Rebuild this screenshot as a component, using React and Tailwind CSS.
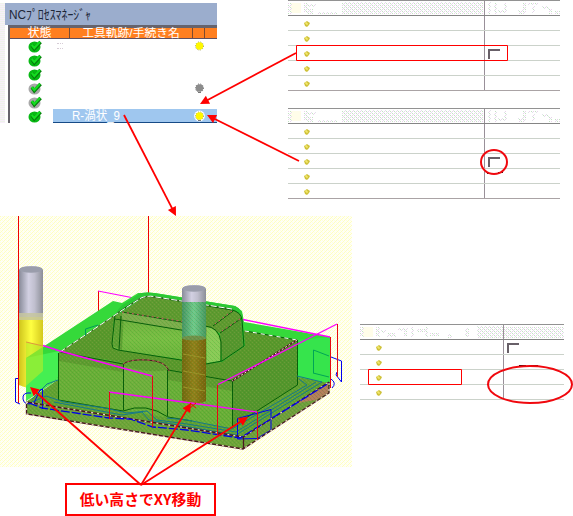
import React from "react";

const JP = "font-['Liberation_Sans','Noto_Sans_CJK_JP',sans-serif]";

function CheckIcon({ muted }) {
  return (
    <svg width="16" height="14" viewBox="0 0 16 14" className="block">
      <ellipse cx="6.5" cy="8" rx="6" ry="5.6" fill={muted ? "#a8a8a8" : "#08b914"} />
      <path d="M4 6.5 6.3 9.8 12.6 3" fill="none" stroke="#067a0b" strokeWidth="3.4" />
      <path d="M3.8 6 6.3 9 12 2.8" fill="none" stroke="#14dc20" strokeWidth="2.2" />
    </svg>
  );
}

function Lamp({ off, white }) {
  return (
    <svg width="12" height="12" viewBox="0 0 12 12" className="block">
      {white && <circle cx="5.5" cy="6" r="5.4" fill="#fff" />}
      <circle cx="5.5" cy="6" r="4" fill="none" stroke={off ? "#555" : "#88883c"} strokeWidth="1" strokeDasharray="1 1.4" />
      <circle cx="5.5" cy="6" r="3.7" fill={off ? "#8c8c8c" : "#fff800"} />
      {(off || white) && <path d="M4 10.5h3" stroke="#777" />}
    </svg>
  );
}

const processes = [
  { lamp: "on" },
  {},
  {},
  { muted: true, lamp: "off" },
  { muted: true },
  { name: "R-渦状_9", lamp: "on", selected: true },
];

function ProcessManager() {
  return (
    <section className={`mt-[3px] flex h-[120px] w-[217px] overflow-hidden ${JP}`}>
      <div className="w-[5px] bg-[repeating-linear-gradient(180deg,#eef3ea_0_1px,#f7eefa_1px_2px)]" />
      <div className="flex-1">
        <h1 className="h-[22px] whitespace-nowrap bg-[#9badcd] pl-1 pt-[1px] text-[13px] leading-[21px]">
          <svg width="86" height="21" className="block overflow-visible">
            <text x="0" y="15" textLength="82" lengthAdjust="spacingAndGlyphs" fill="#1d2637">NCﾌﾟﾛｾｽﾏﾈｰｼﾞｬ</text>
          </svg>
        </h1>
        <div className="ml-[3px] h-[98px] border-l-2 border-t-[3px] border-[#66636c]">
          <div className="flex h-[11px] border-b border-[#605060] bg-[#ff7f20] text-[12px] leading-[10px] text-white">
            <div className="w-[60px] border-r border-[#7c4a30] text-center">状態</div>
            <div className="w-[123px] whitespace-nowrap border-r border-[#7c4a30] text-center text-[11.8px]">工具軌跡/手続き名</div>
            <div className="w-[12px] border-r border-[#7c4a30]" />
          </div>
          {processes.map((p, i) => (
            <div key={i} className="flex h-[14px]">
              <div className="w-[43px] pl-[18px]"><CheckIcon muted={p.muted} /></div>
              <div className={`flex flex-1 items-center ${p.selected ? "border-b border-[#164a86] bg-[#9fc7ef]" : ""}`}>
                <div className="w-[141px] whitespace-nowrap pl-[19px] text-[12.4px] leading-[14px] text-white">
                  {i === 0 && <span className="-ml-[15px] block h-[6px] w-[6px] border-y border-dotted border-[#d6ccd6]" />}
                  {p.name && (
                    <svg width="52" height="13" className="block overflow-visible">
                      <text x="0" y="11" textLength="48" lengthAdjust="spacingAndGlyphs" fill="#fff">{p.name}</text>
                    </svg>
                  )}
                </div>
                {p.lamp && <Lamp off={p.lamp === "off"} white={p.selected} />}
              </div>
            </div>
          ))}
        </div>
      </div>
    </section>
  );
}

function Bullet() {
  return (
    <svg width="6" height="6" viewBox="0 0 6 6">
      <path d="M0 2 3 0 6 2 5 4 3 6 1 5Z" fill="#cfc23a" />
      <path d="M1 2h2v2" stroke="#fff47d" fill="none" />
    </svg>
  );
}

function CheckBox() {
  return <span className="block h-[10px] w-[12px] border-l-2 border-t-2 border-[#686068]" />;
}

function HeaderGrain({ rows, small, id }) {
  return (
    <svg width="100%" height="14" className="block">
      <defs>
        <pattern id={id} width="4" height="4" patternUnits="userSpaceOnUse">
          <path d="M0 .5h1M2 2.5h1" stroke="#c3e4c2" />
          <path d="M2 .5h1M0 2.5h1" stroke="#ebd3ec" />
          <path d="M1 1.5h1M3 3.5h1" stroke="#e2e2ea" />
        </pattern>
      </defs>
      {!small && <rect x="3" y="2" width="10" height="10" fill="#fffde9" />}
      {rows.map(([x, y, w, h], i) => <rect key={i} x={x} y={y} width={w} height={h} fill={`url(#${id})`} />)}
    </svg>
  );
}

function PropertyTable({ id, rows, checked, wide, narrow, grain, endGrain }) {
  return (
    <div className={`${wide ? "w-[272px]" : "w-[204px]"} border-t border-[#929292]`}>
      {[-1, ...Array(rows).keys()].map((i) => (
        <div
          key={i}
          className={`flex h-[15px] border-b ${i === -1 ? "border-[#858585]" : i === rows - 1 && !narrow ? "border-[#aaa3a5]" : "border-[#cbd2ca]"}`}
        >
          <div className={`${wide ? "w-[197px]" : "w-[144px]"} border-r border-[#999099] ${i >= 0 ? "pl-4 pt-[5px]" : ""}`}>
            {i < 0 ? <HeaderGrain id={`${id}-name`} rows={grain} /> : <Bullet />}
          </div>
          <div className={i >= 0 ? "pl-[3px] pt-[3px]" : "flex-1"}>
            {i < 0 ? <HeaderGrain id={`${id}-value`} rows={endGrain} small /> : i === checked && <CheckBox />}
          </div>
        </div>
      ))}
    </div>
  );
}

const grainWide = [[0, 2, 4, 11], [16, 2, 4, 10], [20, 3, 8, 3], [20, 8, 5, 5], [30, 11, 20, 2], [54, 1, 141, 12]];
const endWide = [[3, 1, 3, 12], [9, 2, 3, 11], [13, 9, 9, 3], [19, 2, 3, 7], [33, 9, 7, 4], [38, 2, 3, 10], [43, 2, 10, 2], [47, 5, 3, 7], [57, 5, 7, 3], [64, 8, 3, 5], [70, 10, 5, 3]];
const grainNarrow = [[0, 2, 4, 10], [16, 2, 4, 10], [21, 5, 5, 3], [27, 8, 9, 4], [38, 3, 10, 3], [44, 6, 3, 6], [51, 2, 3, 10], [57, 4, 8, 3], [65, 2, 3, 10], [70, 8, 9, 3], [88, 9, 4, 4], [105, 3, 4, 9], [117, 1, 26, 12]];

function Cutter({ x, top, mid, bottom, tint, clip }) {
  return (
    <g>
      <path d={`M${x} ${mid}V${top + 4}Q${x + 1} ${top} ${x + 12} ${top}T${x + 24} ${top + 4}V${mid}Z`} fill="url(#steel)" />
      <ellipse cx={x + 12} cy={top + 3.5} rx="11.5" ry="3.3" fill="#9a9dab" />
      <path d={`M${x} ${mid - 3}H${x + 24}V${bottom - 3}Q${x + 12} ${bottom + 3} ${x} ${bottom - 3}Z`} fill={`url(#${tint})`} />
      {clip && <rect x={x} y={mid - 7} width="24" height="7" fill="#c5c6a0" opacity=".85" />}
    </g>
  );
}

const rim = "M60 352 118 313 124 309 141 298Q148 295 156 297L232 309";

function MachiningView() {
  return (
    <svg width="352" height="251" viewBox="0 216 352 251" className="block shrink-0">
      <defs>
        <pattern id="cream" width="4" height="4" patternUnits="userSpaceOnUse">
          <rect width="4" height="4" fill="#fffff6" />
          <path d="M0 .5h1M3 1.5h1M2 2.5h1M1 3.5h1" stroke="#ffffc0" />
          <path d="M2 .5h1M0 2.5h1" stroke="#ffffe0" />
        </pattern>
        <pattern id="grain" width="4" height="4" patternUnits="userSpaceOnUse">
          <path d="M0 .5h1M2 2.5h1" stroke="#2e7a18" opacity=".22" />
          <path d="M2 .5h1M0 2.5h1" stroke="#a8b060" opacity=".24" />
          <path d="M1 1.5h1M3 3.5h1" stroke="#35a021" opacity=".22" />
        </pattern>
        <linearGradient id="steel">
          <stop offset="0" stopColor="#888b99" /><stop offset=".4" stopColor="#d2d0e2" />
          <stop offset=".65" stopColor="#c0bfce" /><stop offset="1" stopColor="#8c8f98" />
        </linearGradient>
        <linearGradient id="gold">
          <stop offset="0" stopColor="#cfc51c" /><stop offset=".5" stopColor="#ffff42" /><stop offset="1" stopColor="#d4c91d" />
        </linearGradient>
        <linearGradient id="bronze">
          <stop offset="0" stopColor="#73660e" /><stop offset=".5" stopColor="#93801a" /><stop offset="1" stopColor="#77600b" />
        </linearGradient>
        <linearGradient id="jade">
          <stop offset="0" stopColor="#3f9460" /><stop offset=".5" stopColor="#68cc88" /><stop offset="1" stopColor="#3f985e" />
        </linearGradient>
        <linearGradient id="bossFront" x1="0" y1="0" x2="0" y2="1">
          <stop offset="0" stopColor="#6bae3c" /><stop offset=".5" stopColor="#78c044" /><stop offset="1" stopColor="#69b23a" />
        </linearGradient>
      </defs>
      <rect y="216" width="352" height="251" fill="url(#cream)" />
      <path d="M18.5 216V403M148.5 216V294M98.5 291V328" stroke="#f00000" />
      <path d="M98 291 134 298" stroke="#ff00ff" strokeWidth="1.2" />
      <Cutter x={19} top={266} mid={320} bottom={388} tint="gold" clip />

      <path d="M26 358 113 301 122 303 138 293 155 293 235 306 242 311 244 322 330 337V386L297 382 60 375 26 401Z" fill="#35d93a" />
      <path d="M26 358 59 351V379L26 401Z" fill="#45ef52" />
      <path d="M26 342 43 345V371L26 386Z" fill="#b9ed28" opacity=".6" />
      <path d="M297 340 330 337V386L297 382Z" fill="#36e44c" />

      <path d="M26 402 59 379 297 377 329 383 243 437Z" fill="#62a232" />
      <path d="M26 402 243 437V449L26 414Z" fill="#6fa53a" />
      <path d="M243 437 329 383V393L243 449Z" fill="#6f9f3c" />
      <path d="M296 404 328 384V393L316 400 303 402Z" fill="#b57c5c" />

      <path d="M60 352 118 313 245 331 297 340 232 381 168 370Z" fill="#5a982c" />
      <path d="M59 352 232 381V428L59 400Z" fill="#69b038" />
      <path d="M59 352 232 381V391L59 361Z" fill="#5a942d" opacity=".7" />
      <path d="M232 381 297 340V385L232 427Z" fill="#55962d" />

      <path d="M123 365Q127 359 146 360T168 370V413L146 406 123 408Z" fill="#6fb13d" />
      <path d="M124 365Q128 360 146 360 162 361 168 370 147 374 124 366Z" fill="#619f33" />

      <path d="M113 338Q112 311 124 304L139 294Q145 291 154 293L235 306Q243 309 243 320L245 346 222 362 206 364 117 350Z" fill="#2cc834" />
      <path d="M122 312 141 299Q146 296 155 297L232 310Q242 312 241 320L220 333 205 326Z" fill="#5f9a30" />
      <path d="M115 315 120 313 207 327Q219 329 221 342V360L206 363 117 350 112 347Z" fill="url(#bossFront)" />
      <path d="M115 315 124 312 122 350 113 346Z" fill="#5ea133" />
      <path d="M122 312 204 326 214 330 208 334 122 321Z" fill="#7cae4c" />
      <path d="M207 327 215 330 220 340V361L207 363Z" fill="#8acd58" />
      <path d="M220 333 241 319 243 346 222 361Z" fill="#56962e" />
      <path d="M26 402 60 375 60 352 118 313 140 297 236 309 244 330 297 340V377L329 383V393L243 449 26 414Z" fill="url(#grain)" />

      <g fill="none" stroke="#075f0a" strokeWidth="1">
        <path d="M58.5 353V400L123 411Q146 402 168 417L192 421M60 352 123 364M168 370 232 381M232.5 381V428M297.5 340V385L232 427" />
        <path d="M123.5 364V410M167.5 370V416" />
        <path d="M113 348 112 344 115 315Q122 309 141 298 147 295 155 297L232 310Q241 312 242 320L244 346 222 361 206 364 118 350Z" />
        <path d="M115 319 205 334M122 312 205 326Q219 327 221 342V361M213 326 233 311M220 333 242 318M121 316 119 350" />
        <path d="M245 331 297 340" />
      </g>
      <g fill="none" strokeWidth="1">
        <path d={rim} stroke="#36581b" />
        <path d={rim} stroke="#ffffff" strokeDasharray="6 2" />
        <path d="M245 331 297 340" stroke="#ffffff" strokeDasharray="4 4" />
        <path d="M297 340 232 381" stroke="#4c1720" strokeWidth="1.6" />
        <path d="M297 340 232 381" stroke="#ffdfd6" strokeDasharray="2 2" />
        <path d="M123 364Q130 359 147 360 166 361 169 371" stroke="#4c1720" />
        <path d="M123 364Q130 359 147 360 166 361 169 371M122 312 204 325M232 311 215 324M240 319 222 331" stroke="#d05864" strokeDasharray="2 3" />
        <path d="M85.5 336V329L98 325" stroke="#009c58" />
      </g>

      <Cutter x={182} top={285} mid={341} bottom={404} tint="bronze" />
      <rect x="182" y="302" width="24" height="37" fill="url(#jade)" opacity=".92" />
      <ellipse cx="194" cy="338" rx="12" ry="2.5" fill="#70914a" />
      <path d="M183 354 205 358M183 371 205 375M183 387 205 391" stroke="#9d9326" />
      <path d="M182 302H206V404H182Z" fill="url(#grain)" />

      <g fill="none" stroke="#16788a">
        <path d="M32 399 47 384 58 380M30 403 46 396 64 402 105 408 127 413 147 411 157 420 187 424 236 432 316 382" />
        <path d="M54 402 80 407 122 415 142 412 149 420 189 427 236 435 322 382 297 376" />
        <path d="M167 418 187 420 232 429 307 385 299 379" />
      </g>
      <g fill="none" stroke="#0000ef" strokeWidth="1">
        <path d="M18 378.5H15.5V402L20 404M31 393Q22 392 23 399T34 403L40 390 42.5 389V409" />
        <path d="M237.5 418.5 271 409.5V430L257 438.5 237.5 439ZM331 357 341.5 361V382L336 375 337 372M331 379Q337 383 332 388" />
        <path d="M313.5 373V350L329 356" stroke="#00a556" />
        <path d="M313 373 329 377" stroke="#00a556" />
      </g>
      <g fill="none" strokeWidth="1.3">
        <path d="M26.5 402V414L243 449 329 393V382M243.5 437V449M26 402 243 437 329 382" stroke="#481721" />
        <path d="M26.5 402V414L243 449 329 393V382M26 402 243 437 329 382" stroke="#e5d5bb" strokeDasharray="2 4" />
      </g>
      <path d="M29 403 42 408 109 418 130 419 153 427 187 430 240 438 329 383" fill="none" stroke="#0000e8" strokeWidth="1.3" strokeDasharray="9 2" />
      <g fill="none" stroke="#ff00ff" strokeWidth="1.4">
        <path d="M43 345.5 60 351 152 376M109 392 176 401 257 412M218 384.5 337 324M243 319.5 330 337" />
        <path d="M26 342 43 346" stroke="#e2963f" strokeWidth="1" />
      </g>
      <path d="M152.5 376V427M109.5 392V419M217.5 385V435M257.5 412V440M330.5 337V388M337.5 324V377" stroke="#e60910" />
      <path d="M190 403 196 408M196 403 190 408" stroke="#ff0000" />
    </svg>
  );
}

function Arrow({ from, to }) {
  const angle = Math.atan2(to[1] - from[1], to[0] - from[0]);
  const end = [to[0] - Math.cos(angle) * 6, to[1] - Math.sin(angle) * 6];
  return (
    <g stroke="#ff0000" fill="#ff0000">
      <path d={`M${from[0]} ${from[1]} ${end[0]} ${end[1]}`} strokeWidth="1.8" />
      <path d="M0 0-9-4.5V4.5Z" stroke="none" transform={`translate(${to[0]} ${to[1]}) rotate(${angle * 180 / Math.PI})`} />
    </g>
  );
}

function Annotations() {
  return (
    <svg width="573" height="516" className="pointer-events-none absolute inset-0">
      <path d="M487 173.5h4M498 172.5h5M519 365.5h7M530 365.5h8" stroke="#111" />
      <Arrow from={[296, 53]} to={[200, 104]} />
      <Arrow from={[299, 161]} to={[207, 115]} />
      <Arrow from={[124, 115]} to={[176, 216]} />
      <Arrow from={[141, 485]} to={[30, 387]} />
      <Arrow from={[141, 485]} to={[191, 403]} />
      <Arrow from={[141, 485]} to={[248, 417]} />
      <g fill="none" stroke="#ff0000">
        <path d="M296.5 45.5H507.5V60.5H296.5ZM368.5 369.5H461.5V384.5H368.5Z" />
        <ellipse cx="494" cy="162" rx="13" ry="12" stroke="#f0080e" strokeWidth="2" />
        <ellipse cx="530" cy="384.5" rx="42" ry="18.5" stroke="#f0080e" strokeWidth="2" />
      </g>
    </svg>
  );
}

export default function App() {
  return (
    <main className="relative h-[516px] w-[573px] overflow-hidden bg-white">
      <div className="flex h-[216px]">
        <div className="w-[288px]"><ProcessManager /></div>
        <div className="flex flex-col gap-[17px]">
          <PropertyTable id="first" wide rows={5} checked={2} grain={grainWide} endGrain={endWide} />
          <PropertyTable id="second" wide rows={5} checked={2} grain={grainWide} endGrain={endWide} />
        </div>
      </div>
      <div className="flex h-[251px] gap-2">
        <MachiningView />
        <div className="pt-[108px]">
          <PropertyTable id="third" narrow rows={4} checked={0} grain={grainNarrow} endGrain={[[0, 2, 60, 11]]} />
        </div>
      </div>
      <div className="ml-[65px] mt-4 flex h-[33px] w-[151px] items-center justify-center border-2 border-[#ff0000] bg-white pb-px font-['Noto_Sans_CJK_JP',sans-serif] text-[14.8px] font-bold text-[#ff0000]">
        低い高さでXY移動
      </div>
      <Annotations />
    </main>
  );
}
